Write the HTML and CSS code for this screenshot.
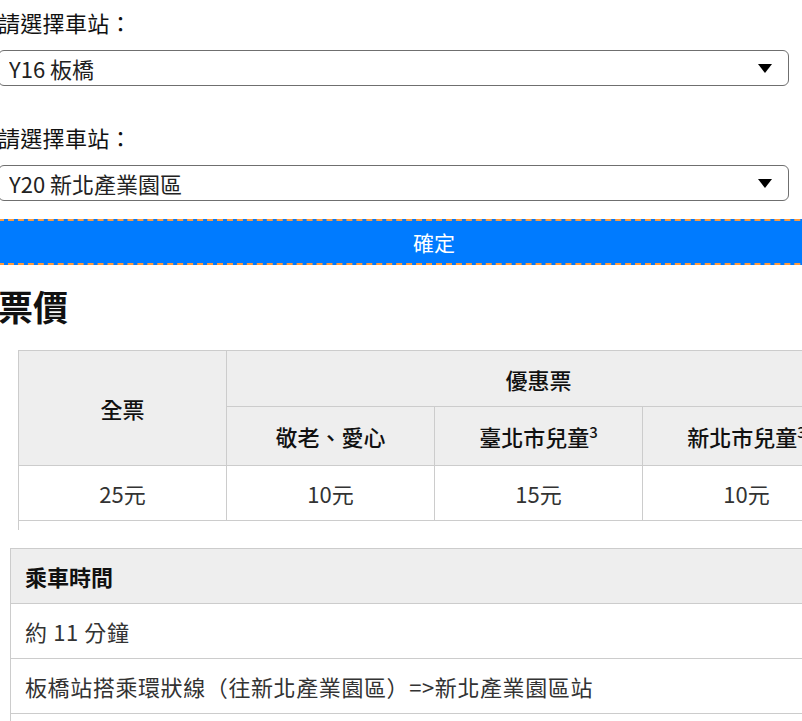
FILE: index.html
```html
<!DOCTYPE html>
<html lang="zh-Hant">
  <head>
    <meta charset="UTF-8" />
    <meta name="viewport" content="width=device-width, initial-scale=1.0" />
    <title>票價查詢</title>
    <link rel="stylesheet" href="styles.css">
  </head>
  <body>
    <div class="page">
      <form class="station-form">
        <label class="field-label first" for="fromStation">請選擇車站：</label>
        <div class="select-wrap">
          <select id="fromStation">
            <option>Y16 板橋</option>
          </select>
        </div>

        <label class="field-label" for="toStation">請選擇車站：</label>
        <div class="select-wrap">
          <select id="toStation">
            <option>Y20 新北產業園區</option>
          </select>
        </div>

        <button type="button" class="submit-btn">確定</button>
      </form>

      <h2 class="section-title">票價</h2>

      <div class="fare-wrap">
        <table class="fare-table">
          <thead>
            <tr>
              <th rowspan="2">全票</th>
              <th colspan="3">優惠票</th>
            </tr>
            <tr>
              <th>敬老、愛心</th>
              <th>臺北市兒童<sup>3</sup></th>
              <th>新北市兒童<sup>3</sup></th>
            </tr>
          </thead>
          <tbody>
            <tr>
              <td>25元</td>
              <td>10元</td>
              <td>15元</td>
              <td>10元</td>
            </tr>
          </tbody>
        </table>
      </div>

      <table class="info-table">
        <thead>
          <tr><th>乘車時間</th></tr>
        </thead>
        <tbody>
          <tr><td>約 11 分鐘</td></tr>
          <tr><td>板橋站搭乘環狀線（往新北產業園區）=&gt;新北產業園區站</td></tr>
          <tr><td>&nbsp;</td></tr>
        </tbody>
      </table>
    </div>
  </body>
</html>
```

FILE: styles.css
```css
html,
body {
  overflow: hidden;
}

body {
  margin: 0;
  font-family: "Noto Sans CJK TC", "Noto Sans", sans-serif;
  color: #222;
  background: #fff;
}

.page {
  margin-left: -2px;
  width: 872px;
}

.station-form {
  display: flex;
  flex-direction: column;
}

.field-label {
  font-size: 22px;
  line-height: 30px;
  margin: 36px 0 13px;
  color: #111;
  letter-spacing: 0.3px;
}

.field-label.first {
  margin-top: 7px;
}

.select-wrap {
  position: relative;
  width: 791px;
}

.select-wrap::after {
  content: "";
  position: absolute;
  right: 17px;
  top: 14px;
  border-left: 7px solid transparent;
  border-right: 7px solid transparent;
  border-top: 9px solid #000;
  pointer-events: none;
}

select {
  appearance: none;
  -webkit-appearance: none;
  width: 100%;
  height: 36px;
  padding: 0 10px;
  font-family: inherit;
  font-size: 22px;
  color: #222;
  background: #fff;
  border: 1px solid #6f6f6f;
  border-radius: 6px;
}

.submit-btn {
  margin-top: 18px;
  width: 872px;
  height: 46px;
  font-family: inherit;
  font-size: 21px;
  color: #fff;
  background-color: #007bff;
  border: 2px dashed #ff9a3c;
  cursor: pointer;
}

.section-title {
  font-size: 35px;
  line-height: 40px;
  font-weight: bold;
  margin: 21px 0 24px;
  color: #111;
}

.fare-wrap {
  margin-left: 20px;
  padding-bottom: 9px;
  border-left: 1px solid #ccc;
}

.fare-table {
  border-collapse: collapse;
  margin-left: -1px;
}

.fare-table th,
.fare-table td {
  border: 1px solid #ccc;
  width: 207px;
  font-size: 22px;
  text-align: center;
  padding: 0;
}

.fare-table th {
  background-color: #eee;
  font-weight: 500;
  color: #111;
}

.fare-table thead tr:first-child th {
  height: 55px;
}

.fare-table thead tr:last-child th {
  height: 58px;
}

.fare-table td {
  height: 54px;
  color: #333;
}

.fare-table sup {
  font-size: 15px;
  line-height: 0;
}

.info-table {
  margin: 18px 0 0 12px;
  width: 860px;
  border-collapse: collapse;
}

.info-table th,
.info-table td {
  border: 1px solid #ccc;
  border-right: none;
  text-align: left;
  font-size: 22px;
  padding: 0 14px;
  height: 54px;
}

.info-table th {
  background-color: #eee;
  font-weight: bold;
  color: #111;
}

.info-table td {
  color: #333;
  letter-spacing: 0.6px;
}
```
